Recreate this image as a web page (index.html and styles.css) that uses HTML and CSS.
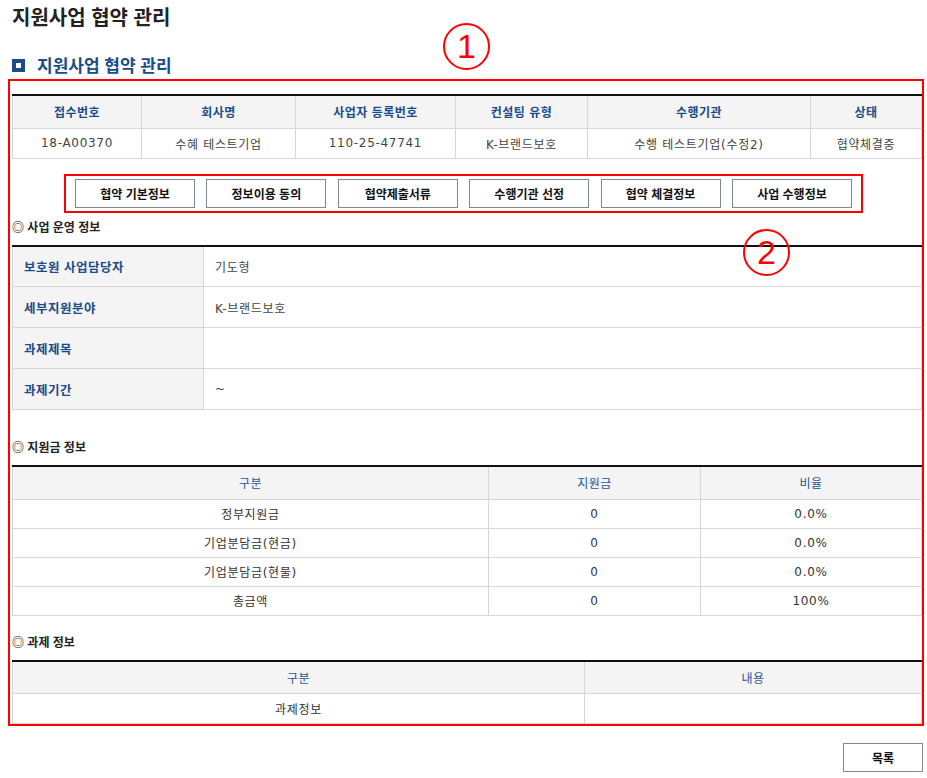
FILE: index.html
```html
<!DOCTYPE html>
<html lang="ko">
<head>
<meta charset="utf-8">
<title>지원사업 협약 관리</title>
<link rel="stylesheet" href="styles.css">
</head>
<body>
<div class="page">
  <h1 class="page-title">지원사업 협약 관리</h1>
  <h2 class="sec-title"><span class="sq"></span>지원사업 협약 관리</h2>

  <div class="red-box">
    <table class="tbl tbl-top">
      <colgroup>
        <col style="width:129px"><col style="width:154px"><col style="width:160px"><col style="width:132px"><col style="width:223px"><col>
      </colgroup>
      <thead>
        <tr><th>접수번호</th><th>회사명</th><th>사업자 등록번호</th><th>컨설팅 유형</th><th>수행기관</th><th>상태</th></tr>
      </thead>
      <tbody>
        <tr><td>18-A00370</td><td>수혜 테스트기업</td><td>110-25-47741</td><td>K-브랜드보호</td><td>수행 테스트기업(수정2)</td><td>협약체결중</td></tr>
      </tbody>
    </table>

    <div class="tab-box">
      <button class="btn">협약 기본정보</button>
      <button class="btn">정보이용 동의</button>
      <button class="btn">협약제출서류</button>
      <button class="btn">수행기관 선정</button>
      <button class="btn">협약 체결정보</button>
      <button class="btn">사업 수행정보</button>
    </div>

    <h3 class="sub-title sub-first">◎ 사업 운영 정보</h3>
    <table class="tbl tbl-form">
      <colgroup><col style="width:191px"><col></colgroup>
      <tbody>
        <tr><th>보호원 사업담당자</th><td>기도형</td></tr>
        <tr><th>세부지원분야</th><td>K-브랜드보호</td></tr>
        <tr><th>과제제목</th><td></td></tr>
        <tr><th>과제기간</th><td>~</td></tr>
      </tbody>
    </table>

    <h3 class="sub-title">◎ 지원금 정보</h3>
    <table class="tbl tbl-list">
      <colgroup><col style="width:476px"><col style="width:212px"><col></colgroup>
      <thead><tr><th>구분</th><th>지원금</th><th>비율</th></tr></thead>
      <tbody>
        <tr><td>정부지원금</td><td>0</td><td>0.0%</td></tr>
        <tr><td>기업분담금(현금)</td><td>0</td><td>0.0%</td></tr>
        <tr><td>기업분담금(현물)</td><td>0</td><td>0.0%</td></tr>
        <tr><td>총금액</td><td>0</td><td>100%</td></tr>
      </tbody>
    </table>

    <h3 class="sub-title sub-last">◎ 과제 정보</h3>
    <table class="tbl tbl-list tbl-task">
      <colgroup><col style="width:572px"><col></colgroup>
      <thead><tr><th>구분</th><th>내용</th></tr></thead>
      <tbody>
        <tr><td>과제정보</td><td></td></tr>
      </tbody>
    </table>
  </div>

  <div class="bottom-bar">
    <button class="btn btn-list">목록</button>
  </div>

  <span class="annot annot-1">1</span>
  <span class="annot annot-2">2</span>
</div>
</body>
</html>
```

FILE: styles.css
```css
* { box-sizing: border-box; }
html, body { margin: 0; padding: 0; background: #fff; }
body {
  font-family: "Noto Sans CJK KR", "Noto Sans", sans-serif;
  color: #333;
  font-size: 12px;
}
.page {
  position: relative;
  width: 927px;
  padding: 3px 0 0 0;
}
.page-title {
  margin: 0 0 0 12px;
  font-size: 20px;
  line-height: 28px;
  font-weight: 700;
  color: #222;
}
.sec-title {
  display: flex;
  align-items: center;
  margin: 23px 0 0 12px;
  font-size: 17px;
  line-height: 22px;
  font-weight: 700;
  color: #1b4b8a;
}
.sq {
  width: 13px;
  height: 13px;
  background: #1b4b8a;
  margin-right: 12px;
  display: flex;
  align-items: center;
  justify-content: center;
}
.sq::after {
  content: "";
  width: 5px;
  height: 5px;
  background: #fff;
}
.red-box {
  margin: 3px 3px 0 8px;
  border: 2px solid #f00;
  padding: 13px 0 0 2px;
}
.tbl {
  width: 100%;
  border-collapse: collapse;
  table-layout: fixed;
  border-top: 2px solid #111;
}
.tbl th, .tbl td {
  border: 1px solid #d6d6d6;
  padding: 0;
  text-align: center;
  font-size: 12px;
}
.tbl td {
  font-family: "DejaVu Sans", "Noto Sans CJK KR", sans-serif;
  letter-spacing: 0.7px;
}
.tbl th { letter-spacing: 0.5px; }
.tbl-top th {
  background: #f4f4f4;
  height: 33px;
  color: #1b4b8a;
  font-weight: 700;
}
.tbl-top td {
  height: 30px;
  color: #444;
}
.tab-box {
  display: flex;
  gap: 11.4px;
  margin: 15px 0 0 52px;
  width: max-content;
  border: 2px solid #f00;
  padding: 3px 9px;
}
.btn {
  width: 120px;
  height: 29px;
  border: 1px solid #7d8893;
  background: #fff;
  font-family: inherit;
  font-size: 12px;
  font-weight: 700;
  color: #111;
  padding: 0;
  cursor: pointer;
}
.sub-title {
  margin: 0;
  font-size: 12px;
  font-weight: 700;
  color: #222;
  line-height: 18px;
  padding: 28px 0 9px;
}
.sub-first { padding-top: 5px; }
.sub-last { padding-top: 17px; }
.tbl-form th {
  background: #f4f4f4;
  height: 41px;
  text-align: left;
  padding-left: 11px;
  color: #1b4b8a;
  font-weight: 700;
  font-size: 12.5px;
}
.tbl-form td {
  text-align: left;
  padding-left: 11px;
  color: #444;
}
.tbl-list th {
  background: #f4f4f4;
  height: 33px;
  color: #1b5496;
  font-weight: 400;
}
.tbl-list td {
  height: 29px;
  color: #333;
}
.tbl-task td { height: 30px; }
.bottom-bar {
  display: flex;
  justify-content: flex-end;
  padding: 17px 4px 0 0;
}
.btn-list { width: 80px; }
.annot {
  position: absolute;
  width: 47px;
  height: 47px;
  border: 2px solid #f00;
  border-radius: 50%;
  color: #f00;
  font-family: "Liberation Sans", sans-serif;
  font-size: 34px;
  line-height: 43px;
  text-align: center;
}
.annot-1 { left: 443px; top: 23px; }
.annot-2 { left: 743px; top: 229px; }
```
